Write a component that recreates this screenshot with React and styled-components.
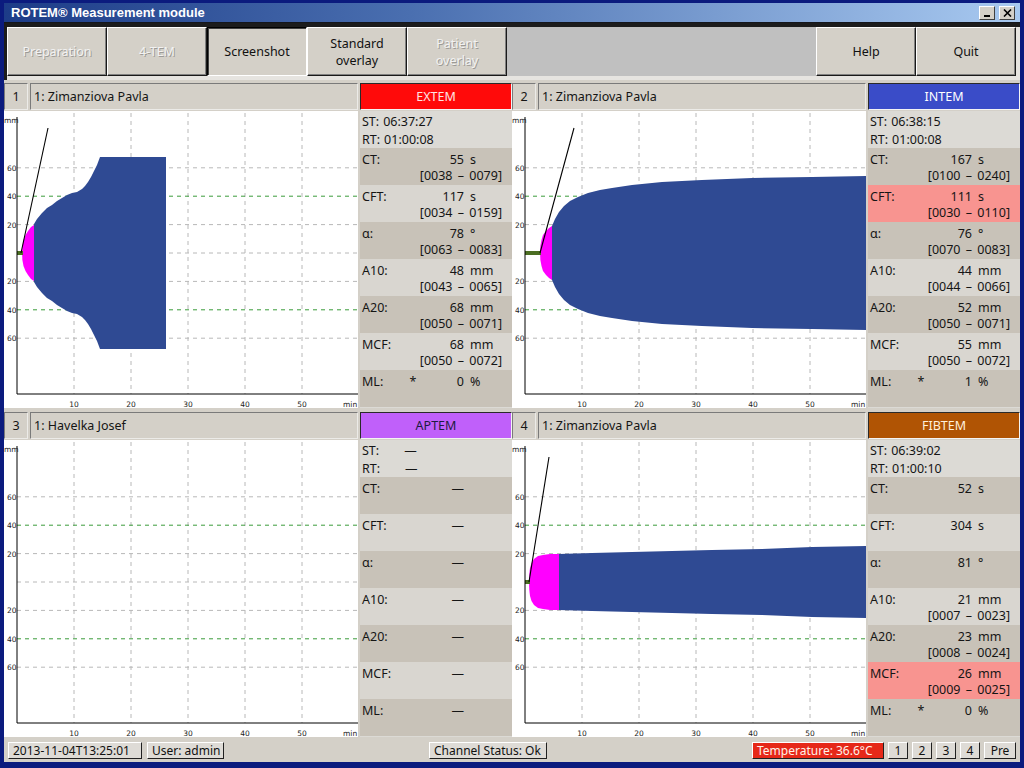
import React from 'react'
import styled, { createGlobalStyle } from 'styled-components'

const GlobalStyle = createGlobalStyle`
  html, body {
    margin: 0;
    padding: 0;
    background: #0b1b7e;
  }
  body {
    font-family: "Noto Sans", "DejaVu Sans", sans-serif;
    font-size: 12px;
    color: #151515;
  }
  * { box-sizing: border-box; }
`

const Window = styled.div`
  width: 1024px;
  height: 768px;
  background: #0b1b7e;
  padding: 3px 4px 6px 4px;
  display: flex;
  flex-direction: column;
  overflow: hidden;
`

const TitleBar = styled.div`
  height: 20px;
  flex-shrink: 0;
  display: flex;
  align-items: center;
  justify-content: space-between;
  padding: 0 5px 0 7px;
  background: linear-gradient(to right, #1d3c88 0%, #4a6fb0 40%, #a8c9f0 100%);
  border-bottom: 1px solid #14161c;
`

const TitleText = styled.span`
  font-family: "Liberation Sans", Arial, sans-serif;
  font-weight: bold;
  font-size: 13px;
  color: #ffffff;
`

const WinButtons = styled.div`
  display: flex;
  gap: 4px;
`

const WinButton = styled.div`
  width: 16px;
  height: 14px;
  background: #d4d0c8;
  border: 1px solid;
  border-color: #ffffff #404040 #404040 #ffffff;
  display: flex;
  align-items: center;
  justify-content: center;
`

const Toolbar = styled.div`
  height: 57px;
  flex-shrink: 0;
  display: flex;
  background: #e6e4e0;
  border-top: 4px solid #1c1c1c;
  border-left: 3px solid #1c1c1c;
  padding: 0 4px 4px 0;
`

const ToolButton = styled.div`
  width: 100px;
  height: 49px;
  display: flex;
  align-items: center;
  justify-content: center;
  text-align: center;
  line-height: 17px;
  font-size: 12.5px;
  background: #d4d0c8;
  border: 1px solid;
  border-color: ${p => (p.$pressed ? '#000000 #ffffff #ffffff #000000' : '#ffffff #1a1a1a #1a1a1a #ffffff')};
  box-shadow: ${p => (p.$pressed ? 'inset 1px 1px 0 #404040' : 'inset -1px -1px 0 #808080')};
  color: ${p => (p.$disabled ? '#f2f2f2' : '#111111')};
  text-shadow: ${p => (p.$disabled ? '1px 1px 0 #9c9a96' : 'none')};
`

const ToolSpacer = styled.div`
  flex: 1;
  background: #c0c0c0;
`

const Main = styled.div`
  flex: 1;
  background: #d4d0c8;
  padding-top: 3px;
  display: grid;
  grid-template-columns: 508px 508px;
  grid-template-rows: 325px 325px;
  row-gap: 4px;
`

const PanelGrid = styled.div`
  display: grid;
  grid-template-columns: 354px 152px;
  grid-template-rows: 27px 297px;
  column-gap: 2px;
  row-gap: 1px;
`

const HeaderLeft = styled.div`
  display: flex;
  gap: 2px;
`

const HeaderBox = styled.div`
  height: 27px;
  display: flex;
  align-items: center;
  background: #d4d0c8;
  border: 1px solid;
  border-color: #7a7a7a #ecebe8 #ecebe8 #7a7a7a;
  font-size: 12.5px;
`

const NumberBox = styled(HeaderBox)`
  width: 24px;
  justify-content: center;
`

const NameBox = styled(HeaderBox)`
  flex: 1;
  padding-left: 3px;
`

const ModeBox = styled.div`
  height: 27px;
  display: flex;
  align-items: center;
  justify-content: center;
  background: ${p => p.$bg};
  color: ${p => p.$fg};
  border: 1px solid;
  border-color: #2a2a2a #f4f4f4 #f4f4f4 #2a2a2a;
  font-size: 12.5px;
`

const ChartBox = styled.div`
  background: #ffffff;
  overflow: hidden;
`

const Params = styled.div`
  display: flex;
  flex-direction: column;
  background: #dcdad5;
  font-size: 12.5px;
`

const TimeBlock = styled.div`
  height: 37px;
  flex-shrink: 0;
  padding: 2px 0 0 2px;
  line-height: 18px;
  background: #dcdad5;
`

const TimeLine = styled.div`
  display: flex;
`

const TimeValue = styled.span`
  margin-left: ${p => (p.$dash ? '25px' : '4px')};
`

const ParamRow = styled.div`
  height: 37px;
  flex-shrink: 0;
  padding: 4px 10px 0 2px;
  line-height: 16px;
  background: ${p => (p.$alert ? '#f89490' : p.$dark ? '#c8c2b8' : '#d9d6d0')};
`

const ValueLine = styled.div`
  display: grid;
  grid-template-columns: 44px 14px 44px auto;
`

const Star = styled.span`
  text-align: center;
`

const Num = styled.span`
  text-align: right;
`

const Unit = styled.span`
  padding-left: 6px;
`

const Range = styled.div`
  text-align: right;
  word-spacing: 2px;
`

const StatusBar = styled.div`
  height: 24px;
  flex-shrink: 0;
  display: flex;
  align-items: center;
  padding: 0 4px;
  background: #d4d0c8;
`

const StatusBox = styled.div`
  width: ${p => p.$w}px;
  height: 17px;
  margin-left: ${p => p.$ml || '0'};
  display: flex;
  align-items: center;
  justify-content: ${p => (p.$center ? 'center' : 'flex-start')};
  padding-left: ${p => (p.$center ? '0' : '4px')};
  background: ${p => p.$bg || '#dedbd6'};
  color: ${p => p.$fg || '#111111'};
  border: 1px solid;
  border-color: #ffffff #202020 #202020 #ffffff;
  font-size: 12px;
  white-space: nowrap;
  overflow: hidden;
`

/* chart geometry, in pixels of a 354 x 297 plot */
const CHART_W = 354
const CHART_H = 297
const X0 = 13
const AXIS_Y = 283
const CY = 142
const PX_MIN = 5.7
const PX_MM = 1.42

const mirror = pts => {
  const top = pts.map(([x, a]) => `${x},${(CY - a).toFixed(1)}`)
  const bottom = [...pts].reverse().map(([x, a]) => `${x},${(CY + a).toFixed(1)}`)
  return `M${top.join(' L')} L${bottom.join(' L')} Z`
}

const traces = {
  extem: {
    start: 18,
    alpha: [17, 44],
    pink: [[18, 0], [18.4, 7], [19.5, 13], [21.5, 18], [24, 22], [27, 26], [30, 28]],
    blue: [[30, 29], [33, 34], [38, 40], [43, 45], [48, 48], [53, 52], [58, 55], [63, 58], [68, 60], [73, 61], [78, 64], [81, 67], [84, 71], [87, 76], [90, 82], [93, 88], [96, 96], [162, 96]],
  },
  intem: {
    start: 28,
    alpha: [28, 62],
    pink: [[28, 0], [28.4, 7], [29.5, 13], [31, 18], [34, 22], [37, 25], [40, 27]],
    blue: [[40, 27], [43, 34], [47, 41], [52, 47], [58, 52], [66, 56], [76, 60], [88, 63], [100, 65], [120, 68], [150, 71], [190, 73], [240, 75], [300, 76], [354, 77]],
  },
  fibtem: {
    start: 17,
    alpha: [17, 37],
    pink: [[17, 0], [17.3, 8], [18, 14], [19.5, 19], [22, 23], [26, 26], [31, 27], [38, 28], [47, 28]],
    blue: [[47, 28], [80, 29], [120, 30], [160, 31], [200, 32], [250, 33], [300, 35], [354, 36]],
  },
}

const Chart = ({ trace }) => {
  const t = traces[trace]
  return (
    <ChartBox>
      <svg width={CHART_W} height={CHART_H} viewBox={`0 0 ${CHART_W} ${CHART_H}`} style={{ display: 'block' }}>
        {[10, 20, 30, 40, 50].map(m => (
          <line key={m} x1={X0 + m * PX_MIN} x2={X0 + m * PX_MIN} y1={2} y2={AXIS_Y} stroke="#b8b8b8" strokeDasharray="4 4" />
        ))}
        {[60, 40, 20, 0, -20, -40, -60].map(v => {
          const y = CY - v * PX_MM
          const green = Math.abs(v) === 40
          return (
            <line key={v} x1={X0} x2={CHART_W} y1={y} y2={y} stroke={green ? '#3a9c3a' : '#b8b8b8'} strokeDasharray="4 4" />
          )
        })}
        {t && (
          <g>
            <path d={mirror(t.blue)} fill="#2f4a93" />
            <path d={mirror(t.pink)} fill="#ff00ff" />
            <rect x={X0} y={CY - 2} width={t.start - X0 + 1} height={4} fill="#4b6e22" />
            <line x1={t.alpha[0]} y1={CY} x2={t.alpha[1]} y2={17} stroke="#000" strokeWidth="1.1" />
          </g>
        )}
        <line x1={X0} x2={X0} y1={6} y2={AXIS_Y} stroke="#000" strokeWidth="1" />
        <line x1={X0} x2={CHART_W} y1={AXIS_Y} y2={AXIS_Y} stroke="#000" strokeWidth="1" />
        <g fontFamily="'DejaVu Sans', sans-serif" fontSize="7.5" fill="#222">
          <text x={0} y={12}>mm</text>
          {[60, 40, 20, -20, -40, -60].map(v => (
            <text key={v} x={3} y={CY - v * PX_MM + 3}>{Math.abs(v)}</text>
          ))}
          {[10, 20, 30, 40, 50].map(m => (
            <text key={m} x={X0 + m * PX_MIN} y={296} textAnchor="middle">{m}</text>
          ))}
          <text x={339} y={296}>min</text>
        </g>
      </svg>
    </ChartBox>
  )
}

const labels = ['CT:', 'CFT:', 'α:', 'A10:', 'A20:', 'MCF:', 'ML:']

const ParamList = ({ data }) => (
  <Params>
    <TimeBlock>
      <TimeLine>ST:<TimeValue $dash={data.empty}>{data.empty ? '—' : data.st}</TimeValue></TimeLine>
      <TimeLine>RT:<TimeValue $dash={data.empty}>{data.empty ? '—' : data.rt}</TimeValue></TimeLine>
    </TimeBlock>
    {labels.map((label, i) => {
      const row = data.empty ? {} : data.rows[i]
      return (
        <ParamRow key={label} $dark={i % 2 === 0} $alert={row.alert}>
          <ValueLine>
            <span>{label}</span>
            <Star>{row.star ? '*' : ''}</Star>
            <Num>{data.empty ? '—' : row.v}</Num>
            <Unit>{row.u}</Unit>
          </ValueLine>
          {row.r && <Range>[{row.r}]</Range>}
        </ParamRow>
      )
    })}
  </Params>
)

const panels = [
  {
    n: 1,
    name: '1: Zimanziova Pavla',
    mode: 'EXTEM',
    bg: '#ff0a0a',
    fg: '#ffe4e4',
    trace: 'extem',
    st: '06:37:27',
    rt: '01:00:08',
    rows: [
      { v: '55', u: 's', r: '0038 – 0079' },
      { v: '117', u: 's', r: '0034 – 0159' },
      { v: '78', u: '°', r: '0063 – 0083' },
      { v: '48', u: 'mm', r: '0043 – 0065' },
      { v: '68', u: 'mm', r: '0050 – 0071' },
      { v: '68', u: 'mm', r: '0050 – 0072' },
      { v: '0', u: '%', star: true },
    ],
  },
  {
    n: 2,
    name: '1: Zimanziova Pavla',
    mode: 'INTEM',
    bg: '#3a4cc8',
    fg: '#ffffff',
    trace: 'intem',
    st: '06:38:15',
    rt: '01:00:08',
    rows: [
      { v: '167', u: 's', r: '0100 – 0240' },
      { v: '111', u: 's', r: '0030 – 0110', alert: true },
      { v: '76', u: '°', r: '0070 – 0083' },
      { v: '44', u: 'mm', r: '0044 – 0066' },
      { v: '52', u: 'mm', r: '0050 – 0071' },
      { v: '55', u: 'mm', r: '0050 – 0072' },
      { v: '1', u: '%', star: true },
    ],
  },
  {
    n: 3,
    name: '1: Havelka Josef',
    mode: 'APTEM',
    bg: '#c060fa',
    fg: '#1c1c40',
    trace: null,
    empty: true,
  },
  {
    n: 4,
    name: '1: Zimanziova Pavla',
    mode: 'FIBTEM',
    bg: '#b05404',
    fg: '#fff0dc',
    trace: 'fibtem',
    st: '06:39:02',
    rt: '01:00:10',
    rows: [
      { v: '52', u: 's' },
      { v: '304', u: 's' },
      { v: '81', u: '°' },
      { v: '21', u: 'mm', r: '0007 – 0023' },
      { v: '23', u: 'mm', r: '0008 – 0024' },
      { v: '26', u: 'mm', r: '0009 – 0025', alert: true },
      { v: '0', u: '%', star: true },
    ],
  },
]

const Panel = ({ data }) => (
  <PanelGrid>
    <HeaderLeft>
      <NumberBox>{data.n}</NumberBox>
      <NameBox>{data.name}</NameBox>
    </HeaderLeft>
    <ModeBox $bg={data.bg} $fg={data.fg}>{data.mode}</ModeBox>
    <Chart trace={data.trace} />
    <ParamList data={data} />
  </PanelGrid>
)

export default function App() {
  return (
    <>
      <GlobalStyle />
      <Window>
        <TitleBar>
          <TitleText>ROTEM® Measurement module</TitleText>
          <WinButtons>
            <WinButton>
              <svg width="8" height="8"><rect x="1" y="6" width="6" height="2" fill="#000" /></svg>
            </WinButton>
            <WinButton>
              <svg width="9" height="8"><path d="M1 0.5 L8 7.5 M8 0.5 L1 7.5" stroke="#000" strokeWidth="1.6" /></svg>
            </WinButton>
          </WinButtons>
        </TitleBar>
        <Toolbar>
          <ToolButton $disabled>Preparation</ToolButton>
          <ToolButton $disabled>4-TEM</ToolButton>
          <ToolButton $pressed>Screenshot</ToolButton>
          <ToolButton>Standard<br />overlay</ToolButton>
          <ToolButton $disabled>Patient<br />overlay</ToolButton>
          <ToolSpacer />
          <ToolButton>Help</ToolButton>
          <ToolButton>Quit</ToolButton>
        </Toolbar>
        <Main>
          {panels.map(p => <Panel key={p.n} data={p} />)}
        </Main>
        <StatusBar>
          <StatusBox $w={134}>2013-11-04T13:25:01</StatusBox>
          <StatusBox $w={77} $ml="5px">User: admin</StatusBox>
          <StatusBox $w={118} $ml="205px">Channel Status: Ok</StatusBox>
          <StatusBox $w={132} $ml="auto" $bg="#e62818" $fg="#fff2ea">Temperature: 36.6°C</StatusBox>
          <StatusBox $w={20} $ml="4px" $center>1</StatusBox>
          <StatusBox $w={20} $ml="4px" $center>2</StatusBox>
          <StatusBox $w={20} $ml="4px" $center>3</StatusBox>
          <StatusBox $w={20} $ml="4px" $center>4</StatusBox>
          <StatusBox $w={32} $ml="4px" $center>Pre</StatusBox>
        </StatusBar>
      </Window>
    </>
  )
}
